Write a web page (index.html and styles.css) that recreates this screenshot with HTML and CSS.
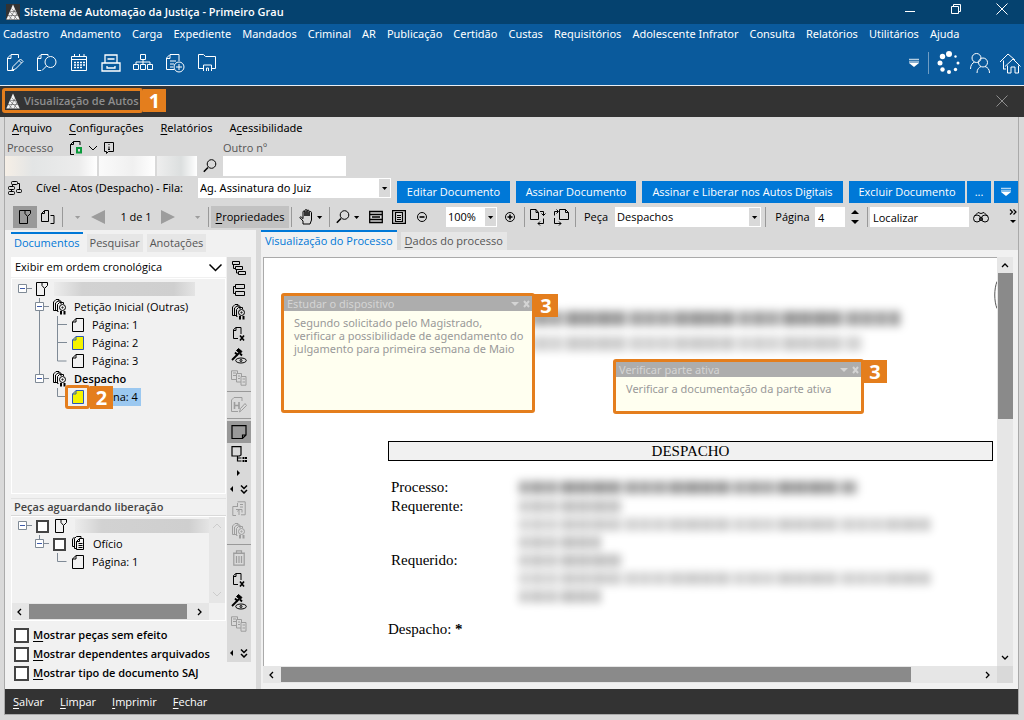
FILE: index.html
```html
<!DOCTYPE html>
<html lang="pt-BR">
<head>
<meta charset="utf-8">
<meta name="viewport" content="width=device-width, initial-scale=1">
<title>Sistema de Automação da Justiça - Primeiro Grau</title>
<link rel="stylesheet" href="styles.css">
</head>
<body>
<svg class="sprite" aria-hidden="true">
  <symbol id="logo" viewBox="0 0 14 16"><path fill="#f2f2f2" stroke="none" d="M7 .5 .3 15.500h13.400z"/><path stroke="#333" stroke-width=".45" fill="none" d="M5.500 4.500l6 6.500M4 8l7.500 7.500M2.500 11.500l3.500 4M4 7.500h6M2 11.500h10M3.500 15.500l5.500-10M8 15.500l3-6"/></symbol>
  <symbol id="page" viewBox="0 0 12 14"><path d="M4 .5h7.500v13H.5V4zM4 .5V4H.5"/></symbol>
  <symbol id="edit" viewBox="0 0 20 20"><path d="M9 17.500H2.500V5L6 1.500h7.500V5M6 2v3.500H3M7 17l1-3.500L15.500 6l2.500 2.500L10.500 16zM14 7.500l2.500 2.500"/></symbol>
  <symbol id="pagefind" viewBox="0 0 20 20"><path d="M4 17.500H.5V5L4 1.500h7V3M4 2v3.500H1"/><circle cx="13.500" cy="9" r="5.500"/><path d="M9.500 13 5 17.500"/></symbol>
  <symbol id="calendar" viewBox="0 0 20 20"><path d="M2.500 3.500h15v14h-15zM2.500 6.500h15M5.500 1v3M10.500 1v3M15 1v3"/><path stroke-dasharray="2 1" d="M5 9.500h11M5 12h11M5 14.500h8" stroke-width="1.500"/></symbol>
  <symbol id="drawer" viewBox="0 0 20 20"><path stroke-width="1.300" d="M1 10h18v8H1zM4 10V2h12v8M6.500 6h7M6 13v2h8v-2"/></symbol>
  <symbol id="org" viewBox="0 0 20 20"><path d="M7.500 1.500h5v5h-5zM.5 11.500h5v5h-5zM7.500 11.500h5v5h-5zM14.500 11.500h5v5h-5zM10 6.500v5M3 11.500V9h14v2.500"/></symbol>
  <symbol id="docplus" viewBox="0 0 20 20"><path d="M9 16.500H1.500V5L5 1.500h9V8M5 2v3.500H2M5 8h6M5 11h4M5 14h3"/><circle cx="14" cy="14" r="5"/><path d="M14 11v6M11 14h6"/></symbol>
  <symbol id="folder" viewBox="0 0 20 20"><path d="M6 15.500H1.500v-14h5l2 2h10v12H15M6.500 18v-6h8v6M9.500 18v-3h2v3"/></symbol>
  <symbol id="menu-down" viewBox="0 0 12 12"><path stroke-width="1.300" d="M1 2.500h10M1 5h10" opacity=".7"/><path fill="currentColor" stroke="none" d="M1 6h10l-5 4z"/></symbol>
  <symbol id="people" viewBox="0 0 22 22"><circle cx="7.500" cy="6" r="4.500"/><path d="M1.500 17c0-4 2-6 4-7"/><circle cx="14" cy="10.500" r="4.500"/><path d="M8 21c0-4 2-5.500 4-6.500M16 14.500c3 1 4.500 3 4.500 6.500"/></symbol>
  <symbol id="home" viewBox="0 0 22 22"><path d="M4.500 17V8.500M1 10l8-8 7 6M6 14.500l8-7.500 7.500 7.500M8.500 13.500V21h3.500v-6h4v6h3.500v-7.500M4 17h3"/></symbol>
  <symbol id="dots" viewBox="0 0 24 24"><g fill="#fff" stroke="none"><circle cx="12" cy="3" r="3"/><circle cx="5.500" cy="5.500" r="2.700"/><circle cx="3" cy="12" r="2.500"/><circle cx="5.500" cy="18.500" r="2.200"/><circle cx="12" cy="21" r="2"/><circle cx="18.500" cy="18.500" r="1.700"/><circle cx="21" cy="12" r="1.500"/><circle cx="18.500" cy="5.500" r="1.200"/></g></symbol>
  <symbol id="close" viewBox="0 0 12 12"><path d="M.5.5l11 11M11.500.5l-11 11"/></symbol>
  <symbol id="down" viewBox="0 0 10 10"><path d="M1 3l4 4 4-4"/></symbol>
  <symbol id="search" viewBox="0 0 14 14"><circle cx="8.500" cy="5" r="4.300"/><path stroke-width="1.600" d="M5 8.500.8 12.800"/></symbol>
  <symbol id="flag-page" viewBox="0 0 12 14"><path d="M6 .5H.5v13h8v-6M6 .5h5.500v3l-3 3-2.500-3zM8.500 6.500v2"/></symbol>
  <symbol id="pages2" viewBox="0 0 14 14"><path d="M3.500.5h4v11h-7v-8zM3.500.5v3h-3M9.500 5.500h3.500v8H9.500"/></symbol>
  <symbol id="flow" viewBox="0 0 16 16"><rect x="4.500" y="1.500" width="6" height="3" rx="1"/><rect x="1.500" y="6.500" width="6" height="3" rx="1"/><rect x="1.500" y="11.500" width="6" height="3" rx="1"/><rect x="9.500" y="9.500" width="5" height="3" rx="1"/><path d="M5.500 4.500v2M10.500 3.500h2v6M4.500 9.500v2"/></symbol>
  <symbol id="hand" viewBox="0 0 14 16"><path d="M4 15V12L.8 8.500c1-1.500 2.200.3 3.200 1.200V3c0-1.500 2-1.500 2 0v4V1.500c0-1.300 2-1.300 2 0V7 2c0-1.300 2-1.300 2 0v5-3.500c0-1.300 2.500-1.300 2.500 0V11L11 15z"/></symbol>
  <symbol id="fit-w" viewBox="0 0 14 14"><path stroke-width="1.300" d="M.7 1.500h12.600v11H.7zM.7 4.500h12.600M.7 9.500h12.600M3 7h8"/></symbol>
  <symbol id="fit-p" viewBox="0 0 14 14"><path stroke-width="1.200" d="M.6.6h12.800v12.800H.6zM3.500 2.500h7v9h-7zM5 5.500h4M5 7.500h4M5 9.500h4"/></symbol>
  <symbol id="minus" viewBox="0 0 12 12"><circle cx="6" cy="6" r="4.500"/><path stroke-width="1.600" d="M3.500 6h5"/></symbol>
  <symbol id="plus" viewBox="0 0 12 12"><circle cx="6" cy="6" r="4.500"/><path stroke-width="1.600" d="M3.500 6h5M6 3.500v5"/></symbol>
  <symbol id="rot-r" viewBox="0 0 18 18"><path d="M7 1.500H1.500v10h8v-7zM7 1.500v3h2.500M11 3.500h3.500v4M12.500 5.500l2 2 2-2M9 15.500h5.500v-5M11 13.500l-2 2 2 2"/></symbol>
  <symbol id="rot-l" viewBox="0 0 18 18"><path d="M13.500 1.500h-6v10h9v-7zM13.500 1.500v3h3M6 3.500H2.500v4M4.500 1.500 6.500 3.500l-2 2M2.500 10v5.500H9M7 13.500l2 2-2 2"/></symbol>
  <symbol id="bino" viewBox="0 0 16 12"><circle cx="4" cy="7.500" r="3.500"/><circle cx="12" cy="7.500" r="3.500"/><circle cx="8" cy="8" r="1.500"/><path d="M1.500 5 5 1.500 8 2.500l3-1L14.500 5"/></symbol>
  <symbol id="tri" viewBox="0 0 8 4"><path fill="currentColor" stroke="none" d="M0 0h7L3.500 4z"/></symbol>
  <symbol id="cert" viewBox="0 0 14 16"><path d="M4 11.500H.5V3L3 .5h3v2M2.500 11V4L5 2h3v3M5.500 12.500h-1V5.500l2-2h4v1.500"/><circle cx="9.500" cy="8.500" r="3"/><circle cx="9.500" cy="8.500" r=".6"/><path stroke-width="2" d="M8 12v3.500M11.500 12v3.500"/></symbol>
  <symbol id="docs" viewBox="0 0 14 16"><path d="M2.500 10.500h-2V3l2-2M4.500 12.500h-2V2.500l2-2H9v2M7.500 2.500h4v11h-7v-8zM7.500 2.500v3h-3M6.500 7.500h4M6.500 9.500h4M6.500 11.500h4"/></symbol>
  <symbol id="tree-i" viewBox="0 0 14 14"><path d="M.5.5h7v3h-7zM3.500 5.500h7v3h-7zM6.500 10.500h7v3h-7zM1.500 3.500v4h2M4.500 8.500v3.500h2"/></symbol>
  <symbol id="stack" viewBox="0 0 14 14"><path d="M3.500 1.500h9v4h-9zM3.500 8.500h9v4h-9zM3.500 3.500h-2v7h2"/></symbol>
  <symbol id="pagex" viewBox="0 0 14 16"><path d="M6 12.500H1.500v-9L4 1.500h5V8M4 1.500v3H1.500"/><path stroke-width="1.600" d="M8 9.500l4 5M12 9.500l-4 5"/></symbol>
  <symbol id="gavel" viewBox="0 0 16 16"><path fill="currentColor" d="M5.500 2.500l2-2 3.500 3-2 2z"/><path stroke-width="1.800" d="M8 5 1 12M9 5.500l2 2M4 4.500l3 3"/><ellipse cx="10" cy="12.500" rx="5.300" ry="2.500"/><circle cx="10" cy="12.500" r="1"/></symbol>
  <symbol id="copies" viewBox="0 0 16 16"><path d="M5 9.500H.5V.8h6V3M2 3h3M2 5.500h3M5.500 12V3.500h5V6M7 6h2M7 8.500h2M10 6.500h5v8.700h-5zM11.500 9h2.500M11.500 12h2.500M5.500 12H10"/></symbol>
  <symbol id="hedit" viewBox="0 0 16 16"><path d="M7 14.500H.5V3L3 .5h8V4"/><path stroke-width="1.600" d="M3.500 5v7M8 5v7M3.500 8.500H8"/><path d="M8.500 15l1-3.500L14 6.500l1.500 2-5 5z"/></symbol>
  <symbol id="note" viewBox="0 0 16 14"><path stroke-width="1.200" d="M1 .7h14V10l-3.500 3.500H1zM15 10h-3.500v3.500"/></symbol>
  <symbol id="notetree" viewBox="0 0 16 16"><path stroke-width="1.200" d="M1 .7h9V9L8.500 10H1zM6.500 10v5h4M6.500 12h4"/><path stroke-width="2" stroke-dasharray="2 .5" d="M11.500 12h4.500M11.500 15h4.500"/></symbol>
  <symbol id="dblpage" viewBox="0 0 14 16"><path d="M5 5.500H.8v9H4M5.500.8h7.700v13H9M5.500 2v4M8 3.500h3M8 6h3M4 8.500h6v3M7 14V8.500M5.500 10.500 7 8.500"/></symbol>
  <symbol id="trash" viewBox="0 0 12 16"><path d="M.8 3.500h10.400v11.700H.8zM0 3h12M3.500 3V.8h5V3M3.500 6v7M6 6v7M8.500 6v7" stroke-width="1.200"/></symbol>
  <symbol id="minusbox" viewBox="0 0 14 18"><path stroke="#7f8a96" fill="#fff" d="M.5 4.500h8v8h-8z"/><path stroke="#7f8a96" d="M9 8.500h5"/><path stroke="#3f5ba9" d="M2 8.500h5"/></symbol>
  <symbol id="arr-more" viewBox="0 0 8 9"><path stroke-width="1.500" d="M1 .5l3 3 3-3M1 5l3 3 3-3"/></symbol>
  <symbol id="chev-r" viewBox="0 0 10 10"><path stroke-width="1.300" d="M3 2l3 3-3 3"/></symbol>
  <symbol id="chev-l" viewBox="0 0 10 10"><path stroke-width="1.300" d="M7 2 4 5l3 3"/></symbol>
</svg>

<header class="titlebar">
  <svg class="ico applogo"><use href="#logo"/></svg>
  <h1>Sistema de Automação da Justiça - Primeiro Grau</h1>
  <div class="winbtns">
    <button aria-label="Minimizar"><svg class="ico i12"><path d="M1 8.500h10"/></svg></button>
    <button aria-label="Restaurar"><svg class="ico i12"><path d="M1.500 3.500h7v7h-7zM3.500 3V1.500h7v7H9"/></svg></button>
    <button aria-label="Fechar janela"><svg class="ico i12"><use href="#close"/></svg></button>
  </div>
</header>

<nav class="mainmenu">
  <button>Cadastro</button><button>Andamento</button><button>Carga</button><button>Expediente</button><button>Mandados</button><button>Criminal</button><button>AR</button><button>Publicação</button><button>Certidão</button><button>Custas</button><button>Requisitórios</button><button>Adolescente Infrator</button><button>Consulta</button><button>Relatórios</button><button>Utilitários</button><button>Ajuda</button>
</nav>

<div class="maintools">
  <button aria-label="Editar"><svg class="ico i20"><use href="#edit"/></svg></button>
  <button aria-label="Consultar"><svg class="ico i20"><use href="#pagefind"/></svg></button>
  <button aria-label="Agenda"><svg class="ico i20"><use href="#calendar"/></svg></button>
  <button aria-label="Arquivo"><svg class="ico i20"><use href="#drawer"/></svg></button>
  <button aria-label="Fluxo"><svg class="ico i20"><use href="#org"/></svg></button>
  <button aria-label="Novo documento"><svg class="ico i20"><use href="#docplus"/></svg></button>
  <button aria-label="Pasta"><svg class="ico i20"><use href="#folder"/></svg></button>
  <div class="toolsright">
    <button aria-label="Mais"><svg class="ico i12"><use href="#menu-down"/></svg></button>
    <i class="bar"></i>
    <svg class="ico i24"><use href="#dots"/></svg>
    <button aria-label="Usuários"><svg class="ico i22"><use href="#people"/></svg></button>
    <button aria-label="Início"><svg class="ico i22"><use href="#home"/></svg></button>
  </div>
</div>

<div class="subtitle">
  <div class="mark subname"><svg class="ico applogo"><use href="#logo"/></svg><h2>Visualização de Autos</h2></div>
  <b class="badge">1</b>
  <button class="subclose" aria-label="Fechar visualização"><svg class="ico i12"><use href="#close"/></svg></button>
</div>

<div class="window">
  <nav class="menu">
    <button><u>A</u>rquivo</button><button><u>C</u>onfigurações</button><button><u>R</u>elatórios</button><button>A<u>c</u>essibilidade</button>
  </nav>

  <div class="process">
    <div class="labels">
      <label for="proc">Processo</label>
      <svg class="ico" width="14" height="14"><path d="M11 4V.5H4.500L1.500 3.500v10H5M4.500.5v3h-3"/><path d="M8 7h4v4.500H8z" stroke="#0a9a3c" stroke-width="2"/></svg>
      <svg class="ico i10"><use href="#down"/></svg>
      <svg class="ico i12"><path d="M1.500.5h9v9h-5l-2 2v-2h-2zM6 2v1M6 4.500v3.500M5 7.500h2"/></svg>
    </div>
    <label for="outro">Outro nº</label>
    <div class="number">
      <input id="proc" class="n1"><input class="n2" aria-label="Ano"><input class="n3" aria-label="Foro">
      <button aria-label="Pesquisar processo"><svg class="ico i14"><use href="#search"/></svg></button>
    </div>
    <input id="outro" class="other">
  </div>

  <div class="queue">
    <svg class="ico i16"><use href="#flow"/></svg>
    <label for="fila">Cível - Atos (Despacho) - Fila:</label>
    <span class="combo qsel"><select id="fila"><option>Ag. Assinatura do Juiz</option></select><svg class="ico drop"><use href="#tri"/></svg></span>
    <div class="actions">
      <button class="a1">Editar Documento</button><button class="a2">Assinar Documento</button><button class="a3">Assinar e Liberar nos Autos Digitais</button><button class="a4">Excluir Documento</button>
      <div class="pair"><button>...</button><button aria-label="Mais ações"><svg class="ico i12"><use href="#menu-down"/></svg></button></div>
    </div>
  </div>

  <div class="toolbar">
    <button class="pressed" aria-label="Marcar"><svg class="ico page"><use href="#flag-page"/></svg></button>
    <button aria-label="Páginas"><svg class="ico i14"><use href="#pages2"/></svg></button>
    <i class="sep"></i>
    <svg class="ico drop dim"><use href="#tri"/></svg>
    <button class="dim" aria-label="Anterior"><svg class="ico i14"><path fill="currentColor" stroke="none" d="M14 0v14L0 7z"/></svg></button>
    <span class="count">1 de 1</span>
    <button class="dim" aria-label="Próximo"><svg class="ico i14"><path fill="currentColor" stroke="none" d="M0 0v14l14-7z"/></svg></button>
    <svg class="ico drop dim last"><use href="#tri"/></svg>
    <i class="sep"></i>
    <button class="props"><u>P</u>ropriedades</button>
    <i class="sep"></i>
    <button class="duo" aria-label="Mover"><svg class="ico" width="14" height="16"><use href="#hand"/></svg><svg class="ico drop"><use href="#tri"/></svg></button>
    <i class="sep"></i>
    <button class="duo" aria-label="Lupa"><svg class="ico i14"><use href="#search"/></svg><svg class="ico drop"><use href="#tri"/></svg></button>
    <button aria-label="Ajustar largura"><svg class="ico i14"><use href="#fit-w"/></svg></button>
    <button aria-label="Ajustar página"><svg class="ico i14"><use href="#fit-p"/></svg></button>
    <button aria-label="Diminuir"><svg class="ico i12"><use href="#minus"/></svg></button>
    <span class="combo zoom"><select aria-label="Zoom"><option>100%</option></select><svg class="ico drop"><use href="#tri"/></svg></span>
    <button aria-label="Aumentar"><svg class="ico i12"><use href="#plus"/></svg></button>
    <i class="sep"></i>
    <button aria-label="Girar à direita"><svg class="ico i18"><use href="#rot-r"/></svg></button>
    <button aria-label="Girar à esquerda"><svg class="ico i18"><use href="#rot-l"/></svg></button>
    <i class="sep"></i>
    <label for="peca">Peça</label>
    <span class="combo"><select id="peca"><option>Despachos</option></select><svg class="ico drop"><use href="#tri"/></svg></span>
    <i class="sep"></i>
    <label for="pag">Página</label>
    <input id="pag" value="4">
    <svg class="ico" width="8" height="14"><path fill="currentColor" stroke="none" d="M0 4h8L4 0zM0 10h8l-4 4z"/></svg>
    <i class="sep"></i>
    <input aria-label="Localizar" value="Localizar">
    <button aria-label="Buscar"><svg class="ico" width="16" height="12"><use href="#bino"/></svg></button>
    <svg class="ico over" width="8" height="16"><path stroke-width="1.200" d="M1 .5l2.500 2.500L1 5.500M4.500.5 7 3 4.500 5.500"/><path fill="currentColor" stroke="none" d="M1 11h6l-3 3z"/></svg>
  </div>

  <main>
    <section class="side">
      <div class="tabs"><button class="on">Documentos</button><button>Pesquisar</button><button>Anotações</button></div>
      <div class="upper">
        <div class="docs">
          <span class="combo order"><select aria-label="Ordem"><option>Exibir em ordem cronológica</option></select><svg class="ico chev"><use href="#down"/></svg></span>
          <ul class="tree">
            <li class="l0"><svg class="ico gut"><use href="#minusbox" x="6" width="14" height="18"/></svg><svg class="ico page"><use href="#flag-page"/></svg><i class="redact"></i></li>
            <li class="l1"><svg class="ico gut"><path class="ln" d="M27.500 0v18"/><use href="#minusbox" x="23" width="14" height="18"/></svg><svg class="ico cert"><use href="#cert"/></svg><span>Petição Inicial (Outras)</span></li>
            <li class="l2"><svg class="ico gut"><path class="ln" d="M27.500 0v18M45.500 0v18M46 8.500h9"/></svg><svg class="ico page"><use href="#page"/></svg><span>Página: 1</span></li>
            <li class="l2"><svg class="ico gut"><path class="ln" d="M27.500 0v18M45.500 0v18M46 8.500h9"/></svg><svg class="ico page read"><use href="#page"/></svg><span>Página: 2</span></li>
            <li class="l2"><svg class="ico gut"><path class="ln" d="M27.500 0v18M45.500 0v9h9"/></svg><svg class="ico page"><use href="#page"/></svg><span>Página: 3</span></li>
            <li class="l1"><svg class="ico gut"><path class="ln" d="M27.500 0v9"/><use href="#minusbox" x="23" width="14" height="18"/></svg><svg class="ico cert"><use href="#cert"/></svg><b>Despacho</b></li>
            <li class="l2"><svg class="ico gut"><path class="ln" d="M45.500 0v8.500h9"/></svg><svg class="ico page read"><use href="#page"/></svg><span class="sel">na: 4</span><i class="mark ring"></i><b class="badge two">2</b></li>
          </ul>
        </div>
        <div class="strip">
          <button aria-label="Árvore"><svg class="ico i14"><use href="#tree-i"/></svg></button>
          <button aria-label="Agrupar"><svg class="ico i14"><use href="#stack"/></svg></button>
          <button aria-label="Certidões"><svg class="ico cert"><use href="#cert"/></svg></button>
          <button aria-label="Tornar sem efeito"><svg class="ico cert"><use href="#pagex"/></svg></button>
          <button aria-label="Sigilo"><svg class="ico i16"><use href="#gavel"/></svg></button>
          <button class="dim" aria-label="Copiar"><svg class="ico i16"><use href="#copies"/></svg></button>
          <hr>
          <button class="dim" aria-label="Histórico"><svg class="ico i16"><use href="#hedit"/></svg></button>
          <hr>
          <button class="pressed" aria-label="Nota"><svg class="ico i16"><use href="#note"/></svg></button>
          <button aria-label="Lista de notas"><svg class="ico i16"><use href="#notetree"/></svg></button>
          <svg class="ico i10 self"><path fill="currentColor" stroke="none" d="M3 2v6l3-3z"/></svg>
          <div class="more"><svg class="ico i10"><path fill="currentColor" stroke="none" d="M6 2v6L3 5z"/></svg><svg class="ico" width="8" height="9"><use href="#arr-more"/></svg></div>
        </div>
      </div>
      <div class="lower">
        <div class="docs">
          <h3>Peças aguardando liberação</h3>
          <div class="pending">
            <ul class="tree">
              <li class="l0"><svg class="ico gut"><use href="#minusbox" x="6" width="14" height="18"/></svg><input type="checkbox" aria-label="Processo"><svg class="ico page"><use href="#flag-page"/></svg><i class="redact"></i></li>
              <li class="l1"><svg class="ico gut"><path class="ln" d="M27.500 0v9"/><use href="#minusbox" x="23" width="14" height="18"/></svg><input type="checkbox" id="of"><svg class="ico cert"><use href="#docs"/></svg><label for="of">Ofício</label></li>
              <li class="l2"><svg class="ico gut"><path class="ln" d="M45.500 0v8.500h9"/></svg><svg class="ico page"><use href="#page"/></svg><span>Página: 1</span></li>
            </ul>
            <div class="vfaint"><svg class="ico i10"><path d="M1 7l4-4 4 4"/></svg><svg class="ico i10"><use href="#down"/></svg></div>
            <div class="hscroll small"><svg class="ico i10"><use href="#chev-l"/></svg><i></i><svg class="ico i10"><use href="#chev-r"/></svg></div>
          </div>
          <div class="checks">
            <label><input type="checkbox"><span><u>M</u>ostrar peças sem efeito</span></label>
            <label><input type="checkbox"><span><u>M</u>ostrar dependentes arquivados</span></label>
            <label><input type="checkbox"><span><u>M</u>ostrar tipo de documento SAJ</span></label>
          </div>
        </div>
        <div class="strip">
          <button class="dim" aria-label="Mover peça"><svg class="ico cert"><use href="#dblpage"/></svg></button>
          <button class="dim" aria-label="Assinar peça"><svg class="ico cert"><use href="#cert"/></svg></button>
          <hr>
          <button class="dim" aria-label="Excluir peça"><svg class="ico" width="12" height="16"><use href="#trash"/></svg></button>
          <button aria-label="Sem efeito"><svg class="ico cert"><use href="#pagex"/></svg></button>
          <button aria-label="Sigilo da peça"><svg class="ico i16"><use href="#gavel"/></svg></button>
          <button class="dim" aria-label="Copiar peça"><svg class="ico i16"><use href="#copies"/></svg></button>
          <div class="more"><svg class="ico i10"><path fill="currentColor" stroke="none" d="M6 2v6L3 5z"/></svg><svg class="ico" width="8" height="9"><use href="#arr-more"/></svg></div>
        </div>
      </div>
    </section>

    <section class="view">
      <div class="tabs"><button class="on">Visualização do Processo</button><button><u>D</u>ados do processo</button></div>
      <div class="viewer">
        <article class="paper">
          <svg class="ico seal" width="3" height="28"><path d="M3 .5C0 8 0 20 3 27.500"/></svg>
          <div class="blurhead"><i></i><i></i></div>
          <h4>DESPACHO</h4>
          <dl>
            <dt>Processo:</dt><dd><i class="bl k1"></i></dd>
            <dt>Requerente:</dt><dd><i class="bl k2"></i><i class="bl k3"></i><i class="bl k4"></i></dd>
            <dt>Requerido:</dt><dd><i class="bl k2"></i><i class="bl k3"></i><i class="bl k4"></i></dd>
          </dl>
          <p>Despacho: <b>*</b></p>
          <aside class="mark sticky s1"><header>Estudar o dispositivo<svg class="ico" width="20" height="8"><path fill="currentColor" stroke="none" d="M0 2h8L4 6z"/><path stroke-width="2" d="M13 1l5 6M18 1l-5 6"/></svg></header><p>Segundo solicitado pelo Magistrado, verificar a possibilidade de agendamento do julgamento para primeira semana de Maio</p><b class="badge">3</b></aside>
          <aside class="mark sticky s2"><header>Verificar parte ativa<svg class="ico" width="20" height="8"><path fill="currentColor" stroke="none" d="M0 2h8L4 6z"/><path stroke-width="2" d="M13 1l5 6M18 1l-5 6"/></svg></header><p>Verificar a documentação da parte ativa</p><b class="badge">3</b></aside>
        </article>
        <div class="vscroll"><svg class="ico i10"><path stroke-width="1.300" d="M2 7l3-3 3 3"/></svg><i></i><svg class="ico i10"><path stroke-width="1.300" d="M2 3l3 3 3-3"/></svg></div>
        <div class="hscroll"><svg class="ico i10"><use href="#chev-l"/></svg><i></i><svg class="ico i10"><use href="#chev-r"/></svg></div>
      </div>
    </section>
  </main>

  <footer>
    <button><u>S</u>alvar</button><button><u>L</u>impar</button><button><u>I</u>mprimir</button><button><u>F</u>echar</button>
  </footer>
</div>
</body>
</html>
```

FILE: styles.css
```css
* { box-sizing: border-box; }
body {
  margin: 0; min-height: 100vh; display: flex; flex-direction: column;
  background: #d9d9d9; color: #000;
  font: 11px/16px "Open Sans", "Noto Sans", sans-serif;
}
button, input, select { font: inherit; color: inherit; border: 0; padding: 0; margin: 0; background: none; border-radius: 0; }
button { display: inline-flex; align-items: center; justify-content: center; white-space: nowrap; }
button u, label u { text-underline-offset: 2px; }
label, span { white-space: nowrap; }
h1, h2, h3, h4, p, ul, dl, dd { margin: 0; padding: 0; }
h1, h2, h3 { font-size: 11px; line-height: 16px; font-weight: 600; }
ul { list-style: none; }
.sprite { position: absolute; width: 0; height: 0; }
.ico { fill: none; stroke: currentColor; stroke-width: 1; flex: none; display: block; }
.i10 { width: 10px; height: 10px; }
.i12 { width: 12px; height: 12px; }
.i14 { width: 14px; height: 14px; }
.i16 { width: 16px; height: 16px; }
.i18 { width: 18px; height: 18px; }
.i20 { width: 20px; height: 20px; }
.i22 { width: 22px; height: 22px; }
.i24 { width: 24px; height: 24px; }
.ico.page { width: 12px; height: 14px; }
.cert { width: 14px; height: 16px; }
.drop { width: 6px; height: 3px; }
.dim { color: #9d9d9d; }

/* Application header */
.titlebar { display: flex; align-items: center; height: 24px; padding: 0 16px 0 6px; background: #05426f; color: #fff; }
.applogo { width: 14px; height: 16px; margin-right: 4px; background: #333; }
.winbtns { display: flex; gap: 34px; margin-left: auto; padding-bottom: 6px; }
.mainmenu { display: flex; gap: 11px; height: 22px; padding: 0 0 2px 3px; background: #0a5a9c; color: #fff; font-family: "Noto Sans", sans-serif; }
.maintools { display: flex; gap: 8px; height: 40px; padding: 5px 3px 11px; background: #0a5a9c; border-bottom: 1px solid #e8eef4; color: #fff; }
.maintools > button { width: 24px; }
.toolsright { display: flex; align-items: center; gap: 8px; margin-left: auto; }
.toolsright .bar { width: 1px; height: 22px; background: #6f9dc4; }

.subtitle { display: flex; align-items: center; height: 31px; padding: 0 0 2px 2px; background: #333; color: #8e8e8e; }
.mark { border: 3px solid #e47e1d; border-radius: 3px; }
.subname { display: flex; align-items: center; height: 25px; width: 141px; padding-left: 1px; }
.subname h2 { white-space: nowrap; }
.subclose { margin: 0 16px 0 auto; }
.badge {
  display: flex; align-items: center; justify-content: center; width: 23px; height: 23px;
  background: #e47e1d; color: #fff; font: 700 20px/23px "Open Sans", sans-serif;
}

/* Case window */
.window { flex: 1; display: flex; flex-direction: column; margin: 0 5px 5px 4px; border: solid #aaa; border-width: 0 1px 1px; }
.menu { display: flex; gap: 17px; height: 22px; padding-left: 7px; font-family: "Noto Sans", sans-serif; }
.process { display: grid; grid-template-columns: 218px 123px; grid-template-rows: 17px 20px; color: #555; }
.process > label { line-height: 18px; }
.labels { display: flex; align-items: center; gap: 5px; padding-left: 2px; }
.labels label { width: 57px; }
.labels svg { color: #000; }
.number { display: flex; gap: 2px; color: #000; }
.number input, .other { background: #fff; height: 20px; min-width: 0; }
.number button { margin-left: 4px; }
.number .n1 { width: 92px; background: linear-gradient(90deg, #f6efe6, #e3e5e5 30%, #ececec 80%, #fff); }
.number .n2 { width: 56px; background: linear-gradient(90deg, #fafafa, #f0f0f0 60%, #fff); }
.number .n3 { width: 40px; background: linear-gradient(90deg, #eee, #dcdfdf 60%, #fff); }

.combo { display: grid; grid-template-columns: 1fr 12px; align-items: center; background: #fff; height: 20px; }
.combo::before { content: ""; grid-area: 1 / 2; height: 18px; margin-right: 1px; background: #d9d9d9; }
.combo select { grid-area: 1 / 1 / 2 / 3; z-index: 1; appearance: none; height: 20px; padding-left: 2px; min-width: 0; width: 100%; }
.combo .drop { grid-area: 1 / 2; margin-left: 3px; z-index: 2; pointer-events: none; }

.queue { display: flex; align-items: flex-start; height: 28px; padding: 2px 0 0 2px; }
.queue label { width: 162px; margin-left: 13px; line-height: 20px; font-family: "Noto Sans", sans-serif; }
.queue > svg { margin-top: 2px; }
.qsel { flex: 0 0 193px; font-family: "Noto Sans", sans-serif; }
.actions { flex: 1; display: flex; gap: 6px; margin: 3px 0 0 6px; color: #fff; }
.actions button { height: 22px; background: #0078d7; }
.a1 { flex: 113; } .a2 { flex: 120; } .a3 { flex: 201; } .a4 { flex: 116; }
.pair { display: flex; gap: 3px; margin-left: -4px; }
.pair button { width: 24px; }

.toolbar {
  display: grid; align-items: center; justify-items: center; height: 26px; padding: 0 1px 0 8px;
  grid-template-columns: 24px 22px 7px 24px 16px 54px 16px 29px 6px 78px 5px 33px 5px 32px 23px 23px 24px 63px 25px 5px 22px 24px 4px 38px minmax(90px, 1fr) 9px 45px 30px 20px 5px 99px 24px 24px;
}
.toolbar .sep { width: 1px; height: 20px; background: #999; }
.toolbar .combo, .toolbar input { width: 100%; }
.toolbar .combo.zoom { width: 51px; justify-self: end; }
.toolbar input { background: #fff; height: 20px; min-width: 0; padding-left: 3px; }
.toolbar .over, .toolbar .last { justify-self: end; }
.toolbar .last { margin-right: 4px; }
.toolbar .count { padding-left: 6px; }
.toolbar .duo { gap: 4px; }
.toolbar .pressed { width: 24px; height: 22px; background: #999; }
.toolbar .props { width: 78px; height: 22px; background: #c2c2c2; }

/* Panels */
main { flex: 1; display: flex; gap: 5px; }
.side { width: 251px; flex: none; padding: 2px 5px 0 6px; background: #f1f1f1; display: flex; flex-direction: column; }
.tabs { display: flex; gap: 4px; }
.tabs button { height: 18px; padding: 0 4px; background: #e6e6e6; color: #555; margin-top: 2px; }
.tabs .on { height: 20px; margin-top: 0; background: #f1f1f1; color: #0078d7; border-top: 2px solid #0078d7; }
.side .tabs button { padding: 0 3px; }
.upper { display: flex; gap: 1px; height: 241px; margin-top: 5px; }
.upper .docs { padding-bottom: 4px; }
.lower { display: flex; gap: 1px; flex: 1; }
.docs { flex: 1; min-width: 0; display: flex; flex-direction: column; }
.order::before { display: none; }
.order { grid-template-columns: 1fr 18px; }
.order select { padding-left: 4px; }
.chev { width: 15px; height: 15px; grid-area: 1 / 2; z-index: 2; pointer-events: none; }
.upper .tree { flex: 1; border: 1px solid #fff; margin-top: 1px; padding-top: 1px; }
.tree li { position: relative; display: flex; align-items: center; height: 18px; }
.tree b { font-weight: 600; }
.gut { height: 18px; }
.ln { stroke: #7f8a96; }
.l0 .gut { width: 24px; } .l1 .gut { width: 41px; } .l2 .gut { width: 60px; }
.l1 span, .l1 b, .l1 label { margin-left: 7px; }
.l2 span { margin-left: 8px; }
.redact { flex: 1; height: 14px; margin: 0 30px 0 6px; background: linear-gradient(90deg, #ececec, #d2d2d2 20%, #cfcfcf 85%, #e4e4e4); }
.read { color: #2a56b8; }
.ico.page.read { fill: #f4f400; }
.tree .sel { background: #9bc8f0; padding: 1px 3px 1px 24px; margin-left: 5px; }
.ring { position: absolute; left: 53px; top: -3px; width: 25px; height: 24px; }
.tree .two { position: absolute; left: 78px; top: -2px; margin: 0; font-weight: 700; }

.strip { width: 24px; background: #d9d9d9; display: flex; flex-direction: column; align-items: center; align-self: flex-start; flex: none; }
.upper .strip { height: 241px; }
.strip button { width: 24px; height: 22px; }
.strip .pressed { background: #999; }
.strip hr { width: 24px; height: 1px; margin: 2px 0; border: 0; background: #999; flex: none; }
.self { margin-top: 3px; }
.more { display: flex; align-items: center; justify-content: space-between; width: 24px; padding: 0 3px 0 0; margin-top: auto; height: 18px; }
.lower .strip { height: 164px; }

h3 { height: 18px; padding-left: 3px; color: #444; border-bottom: 1px solid #d9d9d9; border-top: 1px solid #e2e2e2; }
.pending { display: grid; grid-template-columns: 1fr 16px; grid-template-rows: 1fr 17px; height: 105px; border: 1px solid #fff; }
.pending .redact { margin: 0; }
.pending .tree input { margin-right: 6px; }
.pending .tree .l0 .page { margin-right: 8px; }
.vfaint { display: flex; flex-direction: column; justify-content: space-between; align-items: center; padding: 4px 0; background: #e6e6e6; color: #ccc; }
.hscroll { display: flex; align-items: center; gap: 5px; padding: 0 4px 0 3px; background: #e6e6e6; }
.hscroll i { height: 15px; background: #8a8a8a; }
.small { grid-column: 1 / 2; padding: 0 4px 0 2px; }
.small i { flex: 0 0 158px; }
.hscroll > svg:last-child { margin-left: auto; }
input[type=checkbox] { appearance: none; width: 13px; height: 13px; border: 2px solid #444; background: #fff; flex: none; }
.checks { display: flex; flex-direction: column; gap: 3px; padding: 6px 0 8px 3px; font-weight: 600; }
.checks label { display: flex; align-items: center; gap: 4px; }
.checks input { width: 15px; height: 15px; }

.view { flex: 1; min-width: 0; display: flex; flex-direction: column; }
.viewer {
  flex: 1; display: grid; grid-template-columns: 1fr 16px; grid-template-rows: 1fr 17px;
  border: solid #f1f1f1; border-width: 7px 5px 6px 2px; background: #d9d9d9;
}
.paper { position: relative; background: #fff; border-top: 1px solid #aaa; border-left: 1px solid #aaa; padding: 53px 4px 0 124px; font: 15px/19px "Liberation Serif", serif; }
.vscroll { display: flex; flex-direction: column; align-items: center; background: #e6e6e6; padding: 3px 0; }
.vscroll i { width: 15px; height: 146px; margin-top: 3px; background: #8a8a8a; }
.vscroll > svg:last-child { margin-top: auto; }
.view .hscroll i { flex: 0 1 630px; }
.seal { position: absolute; right: 0; top: 23px; color: #555; }
.blurhead { height: 56px; }
.blurhead i, .bl {
  display: block; filter: blur(4px);
  background:
    repeating-linear-gradient(90deg, #0002 0 37px, #0000 37px 42px, #0003 42px 101px, #0000 101px 108px),
    repeating-linear-gradient(90deg, #0004 0 7px, #0002 7px 12px, #0004 12px 23px, #0003 23px 31px);
}
.blurhead i { height: 15px; width: 376px; margin-left: 136px; }
.blurhead i + i { margin-top: 10px; width: 338px; opacity: .5; }
.paper h4 { height: 20px; margin-top: 74px; border: 1px solid #000; background: #f1f1f1; text-align: center; font-weight: 400; line-height: 18px; }
.paper dl { display: grid; grid-template-columns: 128px 1fr; margin: 17px 0 0 3px; grid-template-rows: 19px 54px 54px; }
.bl { height: 13px; margin: 3px 0 5px; opacity: .6; }
.bl.k1 { width: 338px; opacity: 1; }
.k2 { width: 104px; } .k3 { width: 412px; opacity: .5; } .k4 { width: 82px; }
.paper > p { margin-top: 15px; }
.sticky { position: absolute; background: #fffff0; font: 11px/13px "Noto Sans", sans-serif; color: #999; }
.sticky header { display: flex; align-items: center; justify-content: space-between; height: 15px; padding: 0 1px 0 3px; background: #adadad; color: #d4d4d4; }
.sticky p { padding: 5px 8px 0 10px; }
.sticky .badge { position: absolute; left: 100%; top: -2px; width: 26px; padding-left: 2px; }
.s1 { left: 17px; top: 35px; width: 254px; height: 120px; }
.s2 { left: 349px; top: 101px; width: 251px; height: 55px; }

footer { display: flex; align-items: center; gap: 16px; height: 25px; padding: 1px 0 0 8px; background: #333; color: #fff; }
```
